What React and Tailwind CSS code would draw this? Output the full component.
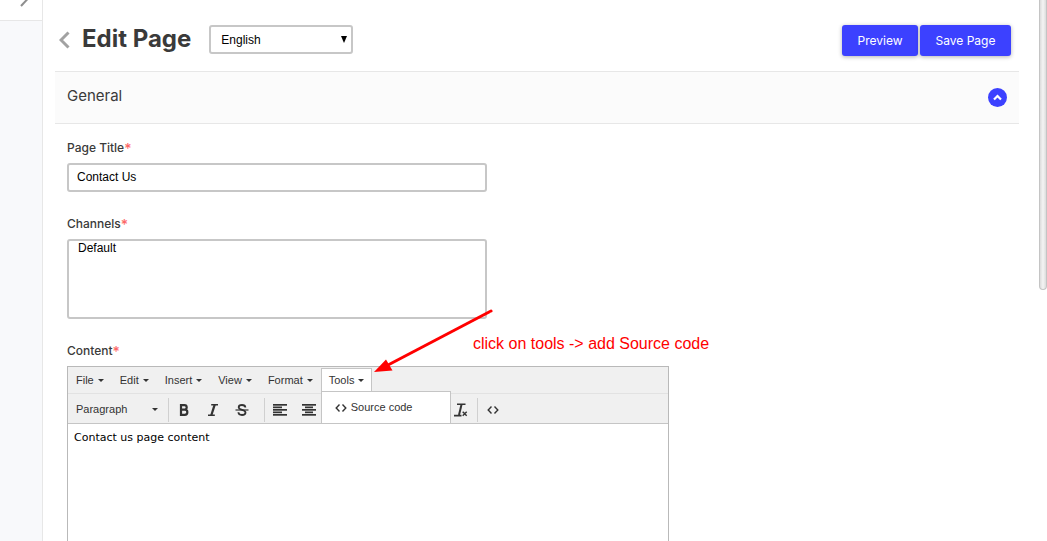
import React, { useState } from "react";

const menus = ["File", "Edit", "Insert", "View", "Format"];

function Caret() {
  return (
    <svg width="6" height="3" viewBox="0 0 6 3" className="shrink-0" fill="#333">
      <path d="M0 0h6L3 3z" />
    </svg>
  );
}

function CodeIcon() {
  return (
    <svg width="12" height="8" viewBox="0 0 12 8" fill="none" stroke="#333" strokeWidth="1.4">
      <path d="M4.5 .6L1.2 4l3.3 3.4M7.5 .6L10.8 4 7.5 7.4" />
    </svg>
  );
}

function LinesIcon({ rows }) {
  return (
    <svg width="14" height="12" viewBox="0 0 14 12" fill="#333">
      {rows.map(([x, w], i) => (
        <rect key={i} x={x} y={i * 2.5} width={w} height="1.7" />
      ))}
    </svg>
  );
}

const full = [0, 14];
const icons = {
  Bold: (
    <svg width="10" height="12" viewBox="0 0 10 12" fill="none" stroke="#333" strokeWidth="2.2">
      <path d="M2 1.1h3.4a2.2 2.2 0 0 1 0 4.6H2M2 5.7h3.8a2.5 2.5 0 0 1 0 5.1H2M2 0v12" />
    </svg>
  ),
  Italic: (
    <svg width="10" height="12" viewBox="0 0 10 12" fill="none" stroke="#333">
      <path d="M3.2 .8H10M0 11.200h6.800" strokeWidth="1.600" />
      <path d="M6.700 .7L3.300 11.300" strokeWidth="2.200" />
    </svg>
  ),
  Strikethrough: (
    <svg width="14" height="12" viewBox="0 0 14 12" fill="none" stroke="#333" strokeWidth="1.800">
      <path d="M10.400 3.500C10.200 1.700 8.800 1 7 1 5 1 3.700 1.800 3.700 3.300c0 3.200 6.800 2 6.800 5.200 0 1.600-1.400 2.500-3.500 2.500S3.500 10.200 3.400 8.300" />
      <path d="M.5 6h13" strokeWidth="1.200" />
    </svg>
  ),
  "Align left": <LinesIcon rows={[full, [0, 9], full, [0, 9], full]} />,
  "Align center": <LinesIcon rows={[full, [3, 8], full, [3, 8], full]} />,
  "Align right": <LinesIcon rows={[full, [5, 9], full, [5, 9], full]} />,
  Justify: <LinesIcon rows={[full, full, full, full, full]} />,
  "Decrease indent": <LinesIcon rows={[full, [5, 9], [5, 9], [5, 9], full]} />,
  "Increase indent": <LinesIcon rows={[full, [5, 9], [5, 9], [5, 9], full]} />,
  "Clear formatting": (
    <svg width="14" height="14" viewBox="0 0 14 14" fill="none" stroke="#333">
      <path d="M3 1.200h8.500M0 12.600h7.500" strokeWidth="1.600" />
      <path d="M7.600 1.200L5 12" strokeWidth="2" />
      <path d="M8.700 8.700l4 4M12.700 8.700l-4 4" strokeWidth="1.400" />
    </svg>
  ),
  "Source code": <CodeIcon />,
};

function ToolGroup({ names, className }) {
  return (
    <div className={className}>
      {names.map((name) => (
        <button key={name} type="button" aria-label={name} className="flex h-7 w-7 items-center justify-center">
          {icons[name]}
        </button>
      ))}
    </div>
  );
}

function Label({ htmlFor, children }) {
  return (
    <label htmlFor={htmlFor} className="mb-1 flex h-[22px] items-center font-[Inter,sans-serif] text-[12px] font-medium text-[#3a3a3a]">
      {children}
      <span className="text-[14px] text-[#fc6868]">*</span>
    </label>
  );
}

function Editor() {
  const [open, setOpen] = useState(true);

  return (
    <div className="relative flex h-[400px] max-w-[602px] flex-col border border-[#b9b9b9] text-[11px] text-[#333]">
      <div className="flex h-[27px] items-start border-b border-[#e2e2e2] bg-[#f0f0f0] pt-px">
        {menus.map((name) => (
          <button key={name} type="button" className="flex h-6 items-center gap-1 border border-transparent px-[7px]">
            {name}
            <Caret />
          </button>
        ))}
        <div className="relative">
          <button
            type="button"
            aria-expanded={open}
            onClick={() => setOpen(!open)}
            className="flex h-6 items-center gap-1 border border-[#c5c5c5] bg-white px-[7px]"
          >
            Tools
            <Caret />
          </button>
          {open && (
            <div className="absolute top-[23px] left-0 z-10 w-[130px] border border-[#c5c5c5] bg-white">
              <button type="button" className="flex h-[31px] w-full items-center gap-1 pl-[13px]">
                <CodeIcon />
                Source code
              </button>
            </div>
          )}
        </div>
      </div>
      <div className="flex h-[30px] items-center border-b border-[#c5c5c5] bg-[#f0f0f0] pt-0.5 pl-2">
        <button type="button" className="flex w-[82px] items-center justify-between">
          Paragraph
          <Caret />
        </button>
        <ToolGroup names={["Bold", "Italic", "Strikethrough"]} className="ml-2.5 flex h-6 items-center gap-px border-l border-[#d0d0d0] pl-px" />
        <ToolGroup names={["Align left", "Align center", "Align right", "Justify"]} className="ml-2 flex h-6 items-center gap-px border-l border-[#d0d0d0] pl-px" />
        <ToolGroup names={["Decrease indent", "Increase indent", "Clear formatting"]} className="ml-1.5 flex h-6 items-center gap-px border-l border-[#d0d0d0] pl-px" />
        <ToolGroup names={["Source code"]} className="ml-0.5 flex h-6 items-center border-l border-[#d0d0d0] pl-px" />
      </div>
      <textarea
        id="content"
        defaultValue="Contact us page content"
        className="flex-1 resize-none bg-white px-1.5 py-1.5 font-['DejaVu_Sans',sans-serif] text-[11px] leading-4 text-black outline-none"
      />
    </div>
  );
}

export default function App() {
  return (
    <div className="flex h-screen overflow-hidden bg-white font-['Liberation_Sans',Arial,sans-serif]">
      <aside className="w-[43px] shrink-0 border-r border-[#e7e7e7] bg-[#f8f9fb]">
        <div className="flex h-[21px] justify-end border-b border-[#e7e7e7] bg-white pr-3">
          <svg width="10" height="7" viewBox="0 0 10 7" fill="none" stroke="#8e8e8e" strokeWidth="2">
            <path d="M8.500-2L1 6" />
          </svg>
        </div>
      </aside>

      <main className="min-w-0 flex-1 pr-5 pl-3">
        <header className="flex h-[71px] items-start pt-[25px] pr-2 pl-1">
          <a href="#back" aria-label="Back" className="mt-1.5">
            <svg width="11" height="18" viewBox="0 0 11 18" fill="none" stroke="#a2a2a2" strokeWidth="3">
              <path d="M9.500 1.500L2 9l7.500 7.500" />
            </svg>
          </a>
          <h1 className="ml-3 font-[Inter,sans-serif] text-[24px] leading-7 font-bold text-[#3a3a3a]">Edit Page</h1>
          <div className="relative ml-[18px]">
            <select
              aria-label="Locale"
              className="h-[29px] w-36 appearance-none rounded-[3px] border-2 border-[#c7c7c7] bg-white px-2.5 text-[12px] text-black"
            >
              <option>English</option>
            </select>
            <svg width="6" height="7" viewBox="0 0 6 7" className="pointer-events-none absolute top-[11px] right-1.5">
              <path d="M0 0h6L3 7z" />
            </svg>
          </div>
          <div className="ml-auto flex gap-0.5 font-[Inter,sans-serif] text-[12px] text-white">
            <button type="button" className="h-[31px] w-[76px] rounded-[3px] bg-[#3c41ff] shadow-[0_1px_4px_rgba(0,0,0,0.3)]">
              Preview
            </button>
            <button type="button" className="h-[31px] w-[91px] rounded-[3px] bg-[#3c41ff] shadow-[0_1px_4px_rgba(0,0,0,0.3)]">
              Save Page
            </button>
          </div>
        </header>

        <section>
          <div className="flex h-[53px] items-center justify-between border-y border-[#e7e7e7] bg-[#fbfbfb] px-3">
            <h2 className="pb-0.5 font-[Inter,sans-serif] text-[15px] text-[#3a3a3a]">General</h2>
            <button type="button" aria-label="Collapse" className="flex size-[19px] items-center justify-center rounded-full bg-[#3c41ff]">
              <svg width="9" height="7" viewBox="0 0 9 7" fill="none" stroke="#fff" strokeWidth="2.200">
                <path d="M1 5.500L4.500 2 8 5.500" />
              </svg>
            </button>
          </div>

          <form className="px-3 pt-[13px]">
            <Label htmlFor="title">Page Title</Label>
            <input
              id="title"
              defaultValue="Contact Us"
              className="mb-[21px] block h-[29px] w-full max-w-[420px] rounded-[3px] border-2 border-[#c7c7c7] px-2 pb-0.5 text-[12px] text-black"
            />
            <Label htmlFor="channels">Channels</Label>
            <select
              id="channels"
              multiple
              className="mb-[21px] block h-20 w-full max-w-[420px] appearance-none overflow-hidden rounded-[3px] border-2 border-[#c7c7c7] bg-white px-[9px] text-[12px] leading-3 text-black"
            >
              <option>Default</option>
            </select>
            <div className="relative">
              <Label htmlFor="content">Content</Label>
              <Editor />
              <p className="absolute top-[-6px] left-[406px] text-[16px] leading-5 whitespace-nowrap text-[#f00]">
                click on tools -&gt; add Source code
              </p>
              <svg width="120" height="66" viewBox="0 0 120 66" className="pointer-events-none absolute top-[-31px] left-[307px]">
                <path d="M117 2L15 55.500" fill="none" stroke="#f00" strokeWidth="3" strokeLinecap="round" />
                <path d="M0 63L12 50.500 18.500 61.500z" fill="#f00" />
              </svg>
            </div>
          </form>
        </section>
      </main>

      <div className="h-[290px] w-2 shrink-0 rounded-b border border-t-0 border-[#c4c4c4] bg-linear-to-r from-[#dcdcdc] via-[#f4f4f4] to-[#dcdcdc]" />
    </div>
  );
}
